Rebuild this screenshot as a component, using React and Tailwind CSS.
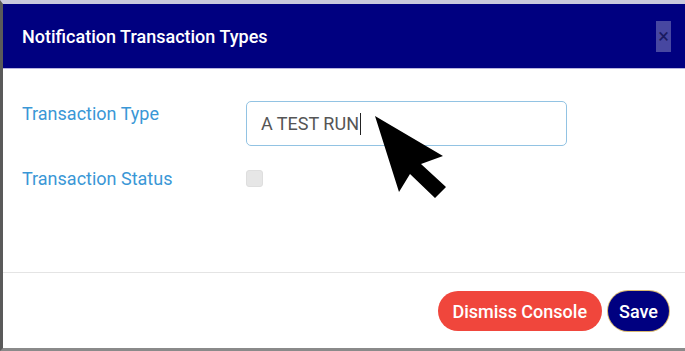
import React from "react";

// notification transaction type modal
function CursorArrow() {
  return (
    <svg
      className="absolute left-[366px] top-[106px]"
      width="84"
      height="94"
      viewBox="0 0 84 94"
    >
      <polygon
        points="6,6 74,46 52,54 77,77 66,88 41,64 30,82"
        fill="#000"
      />
    </svg>
  );
}

export default function App() {
  return (
    <div
      className="relative w-[685px] h-[351px] bg-white overflow-hidden border-t-[4px] border-t-[#c9c9dd] border-l-[3px] border-l-[#5a5a5a] border-b-[3px] border-b-[#8a8a8a]"
      style={{ fontFamily: "Roboto, 'Liberation Sans', sans-serif" }}
    >
      <div className="flex flex-col h-full">
        {/* header */}
        <div className="h-[65px] shrink-0 bg-[#000080] flex items-center justify-between pl-[19px] pr-[14px] border-b border-b-[#b7b3e0]">
          <h1 className="text-white text-[18px] font-medium">
            Notification Transaction Types
          </h1>
          <div className="w-[15px] h-[31px] bg-[#4747a1] flex items-center justify-center text-[#1a1a60] text-[20px] leading-none">
            ×
          </div>
        </div>

        {/* body */}
        <div className="flex-1 flex flex-col pt-[32px] pl-[19px]">
          <div className="flex items-start">
            <label className="w-[224px] text-[18px] text-[#3a97d6] leading-[26px]">
              Transaction Type
            </label>
            <div className="w-[321px] h-[45px] rounded-[5px] border border-[#92c3e3] flex items-center px-[14px]">
              <span className="text-[18px] text-[#555]">A TEST RUN</span>
              <span className="w-px h-[22px] bg-[#222] ml-[1px]" />
            </div>
          </div>
          <div className="flex items-center mt-[19px]">
            <label className="w-[224px] text-[18px] text-[#3a97d6]">
              Transaction Status
            </label>
            <div className="w-[17px] h-[17px] rounded-[3px] bg-[#e6e6e6] border border-[#dedede]" />
          </div>
        </div>

        {/* footer */}
        <div className="h-[76px] shrink-0 border-t border-t-[#e4e4e4] flex items-start justify-end pt-[18px] pr-[16px] gap-[6px]">
          <button className="h-[40px] px-[15px] rounded-full bg-[#f0463c] text-white text-[18px] font-medium">
            Dismiss Console
          </button>
          <button className="h-[40px] px-[11px] rounded-full bg-[#000080] text-white text-[18px] font-medium ring-1 ring-[#d8b870]">
            Save
          </button>
        </div>
      </div>
      <CursorArrow />
    </div>
  );
}
